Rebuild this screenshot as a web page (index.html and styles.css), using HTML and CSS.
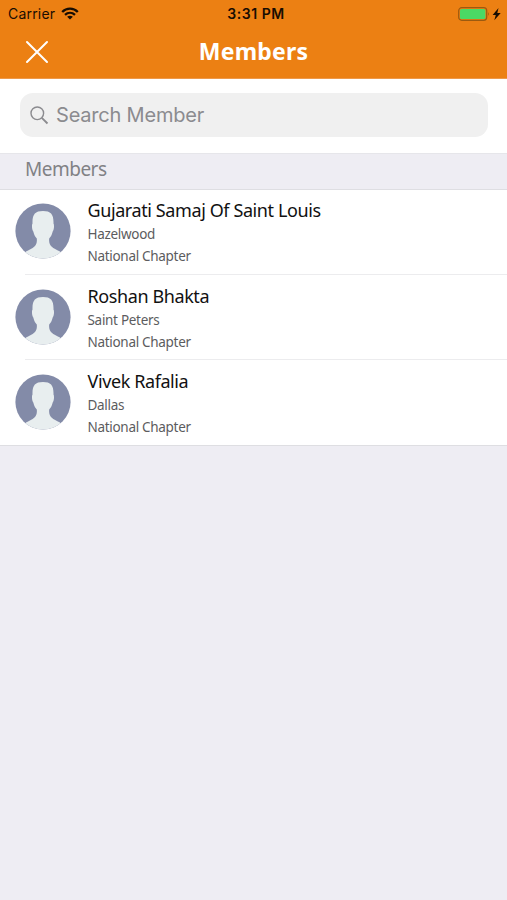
FILE: index.html
```html
<!DOCTYPE html>
<html lang="en">
<head>
<meta charset="utf-8">
<title>Members</title>
<link rel="stylesheet" href="styles.css">
</head>
<body>
<svg class="defs" width="0" height="0" aria-hidden="true">
  <symbol id="avatar" viewBox="0 0 56 56">
    <clipPath id="disc"><circle cx="28" cy="28" r="27.6"/></clipPath>
    <g clip-path="url(#disc)">
      <rect width="56" height="56" fill="#838ba8"/>
      <path fill="#e8eeef" d="M28 8C20 8 17.200 11.500 17.500 20.500C16.500 22 17 27 18.300 28.500C19.200 32.500 20.500 34 21.800 35.500C22.500 43 19 44.500 11 48.500L7 57H49L45 48.500C37 44.500 33.500 43 34.200 35.500C35.500 34 36.800 32.500 37.700 28.500C39 27 39.500 22 38.500 20.500C38.800 11.500 36 8 28 8Z"/>
    </g>
  </symbol>
</svg>
<header class="header">
  <div class="status">
    <div class="carrier">Carrier
      <svg width="18" height="13" viewBox="0 0 18 13" fill="none" stroke="#180d02" stroke-width="2.300">
        <path d="M1.200 5C5.500 .6 12.500 .6 16.800 5M4 7.900C6.900 5.200 11.100 5.200 14 7.900"/>
        <path d="M9 12.500L6.100 9.700Q9 7.600 11.900 9.700Z" fill="#180d02" stroke="none"/>
      </svg>
    </div>
    <div class="time">3:31 PM</div>
    <svg class="battery" width="44" height="14" viewBox="0 0 44 14">
      <rect x=".7" y=".7" width="28" height="12.600" rx="3" fill="none" stroke="#9b5a10" stroke-width="1.200"/>
      <rect x="2" y="2" width="25.400" height="10" rx="1.600" fill="#4bd964"/>
      <path d="M30 5Q31.800 7 30 9Z" fill="#9b5a10"/>
      <path d="M40.500 1L34.600 7.900H37.800L36.300 13.200L42.700 6.100H39.300Z" fill="#180d02"/>
    </svg>
  </div>
  <div class="nav">
    <svg class="close" width="24" height="24" viewBox="0 0 24 24" stroke="#fff" stroke-width="2" stroke-linecap="round"><path d="M2 2L22 22M22 2L2 22"/></svg>
    <h1 class="title">Members</h1>
  </div>
</header>
<div class="search">
  <div class="field">
    <svg width="19" height="19" viewBox="0 0 19 19" fill="none" stroke="#8b8b8f" stroke-width="1.400"><circle cx="7.300" cy="7.300" r="6.300"/><path d="M11.800 11.800L17.500 17.500" stroke-width="1.900"/></svg>
    <span class="placeholder">Search Member</span>
  </div>
</div>
<h2 class="section">Members</h2>
<main class="list">
  <div class="row">
    <svg class="avatar" width="56" height="56"><use href="#avatar"/></svg>
    <div class="info"><div class="name">Gujarati Samaj Of Saint Louis</div><div class="sub">Hazelwood</div><div class="sub">National Chapter</div></div>
  </div>
  <div class="row">
    <svg class="avatar" width="56" height="56"><use href="#avatar"/></svg>
    <div class="info"><div class="name">Roshan Bhakta</div><div class="sub">Saint Peters</div><div class="sub">National Chapter</div></div>
  </div>
  <div class="row">
    <svg class="avatar" width="56" height="56"><use href="#avatar"/></svg>
    <div class="info"><div class="name">Vivek Rafalia</div><div class="sub">Dallas</div><div class="sub">National Chapter</div></div>
  </div>
</main>
</body>
</html>
```
FILE: styles.css
```css
* { box-sizing: border-box; }
body { margin: 0; min-height: 900px; background: #eeedf3; font-family: "Noto Sans", sans-serif; }
.defs { display: block; }
.header { height: 79px; background: #ec8013; border-bottom: 1px solid #ee994a; }
.status { height: 27px; display: grid; grid-template-columns: 1fr auto 1fr; align-items: center; padding: 0 5px 0 8px; font-family: Inter, sans-serif; font-size: 14px; color: #180d02; }
.carrier { display: flex; align-items: center; gap: 6px; letter-spacing: 0.2px; }
.time { padding-left: 2px; font-weight: 600; letter-spacing: 0.55px; }
.battery { justify-self: end; }
.nav { height: 50px; display: grid; grid-template-columns: 1fr auto 1fr; align-items: center; }
.close { margin-left: 25px; }
.title { margin: -2px 0 0; font-size: 23px; font-weight: 700; line-height: 30px; letter-spacing: 0.2px; color: #fff; }
.search { height: 74px; padding: 14px 19px 0 20px; background: #fff; }
.field { height: 44px; display: flex; align-items: center; gap: 7px; padding-left: 10px; border-radius: 13px; background: #f0f0f0; }
.placeholder { font-family: Inter, sans-serif; font-size: 20px; letter-spacing: -0.2px; color: #8b8b8f; }
.section { margin: 0; height: 37px; padding: 1px 0 0 25px; border-top: 1px solid #e6e6ea; border-bottom: 1px solid #dedee2; font-size: 19px; font-weight: 400; line-height: 29px; letter-spacing: -0.5px; color: #818185; }
.list { background: #fff; border-bottom: 1px solid #dedee2; }
.row { height: 85.500px; display: flex; align-items: flex-start; gap: 17px; padding: 13px 0 0 15px; background: linear-gradient(#ececee, #ececee) 25px calc(100% - 1px) / 100% 1px no-repeat; }
.row:last-child { background: none; height: 84px; }
.avatar { flex: none; }
.info { margin: -5px 0 0 -0.5px; white-space: nowrap; }
.name { font-size: 18px; line-height: 25px; letter-spacing: -0.4px; color: #111; }
.sub { font-size: 13.500px; line-height: 22px; letter-spacing: -0.3px; color: #5c5c5e; }
```
